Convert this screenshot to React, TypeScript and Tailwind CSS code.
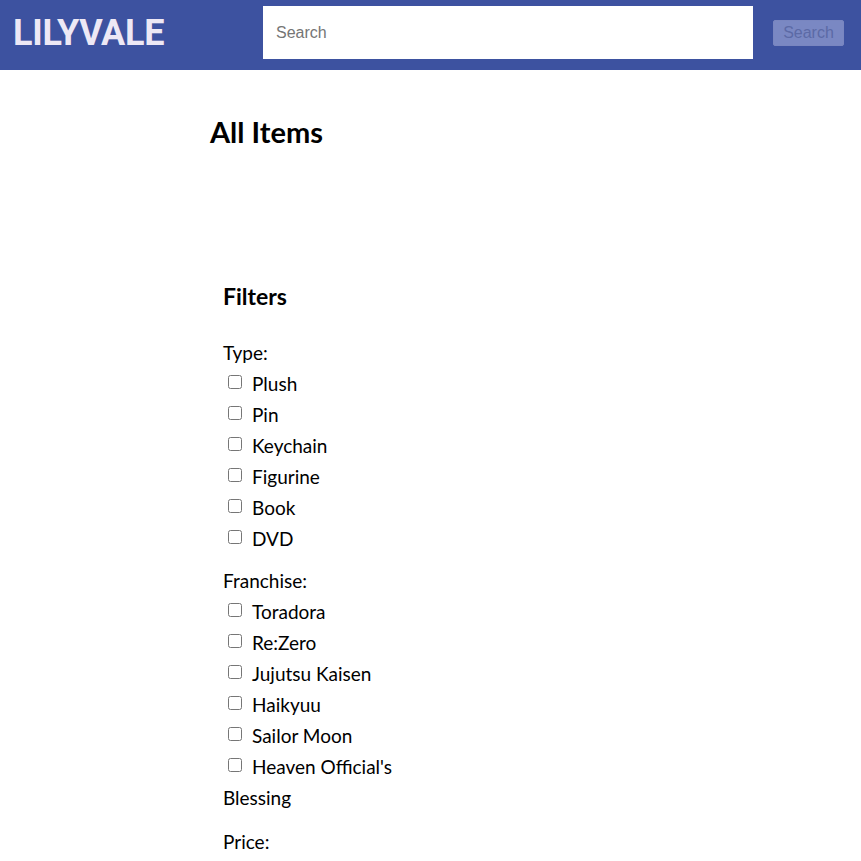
import React from "react";

const types = ["Plush", "Pin", "Keychain", "Figurine", "Book", "DVD"];
const franchises = [
  "Toradora",
  "Re:Zero",
  "Jujutsu Kaisen",
  "Haikyuu",
  "Sailor Moon",
  "Heaven Official's Blessing",
];

const FilterOption = ({ label }: { label: string }) => (
  <div className="leading-[31px]">
    <input
      type="checkbox"
      className="ml-[5px] mr-[10px] h-[14px] w-[14px] align-[2px]"
    />
    {label}
  </div>
);

export default function App() {
  return (
    <div className="min-h-screen bg-white font-['Lato',sans-serif] text-black">
      {/* header */}
      <header className="flex h-[70px] items-center bg-[#3d52a0] pb-[5px] pr-[17px]">
        <h1 className="w-[263px] pl-[13px] font-['Roboto',sans-serif] text-[36px] font-bold tracking-[-0.3px] text-[#ede8f5]">
          LILYVALE
        </h1>
        <input
          type="text"
          placeholder="Search"
          className="h-[53px] w-[490px] bg-white px-[13px] font-['Liberation_Sans',Arial,sans-serif] text-[16px] text-gray-700 placeholder:text-[#757575] outline-none"
        />
        <button className="ml-auto h-[26px] w-[71px] rounded-[2px] border border-[#7986c0] bg-[#7a88c3] font-['Liberation_Sans',Arial,sans-serif] text-[16px] text-[#5c6aa6]">
          Search
        </button>
      </header>

      <main className="pl-[210px]">
        <h2 className="pt-[46px] text-[29px] font-bold leading-[32px]">
          All Items
        </h2>

        <section className="mt-[133px] w-[185px] pl-[13px] text-[19px]">
          <h3 className="text-[23px] font-bold leading-[30px]">Filters</h3>

          <div className="mt-[26px] leading-[31px]">Type:</div>
          {types.map((t) => (
            <FilterOption key={t} label={t} />
          ))}

          <div className="mt-[11px] leading-[31px]">Franchise:</div>
          {franchises.map((f) => (
            <FilterOption key={f} label={f} />
          ))}

          <div className="mt-[13px] leading-[31px]">Price:</div>
        </section>
      </main>
    </div>
  );
}
